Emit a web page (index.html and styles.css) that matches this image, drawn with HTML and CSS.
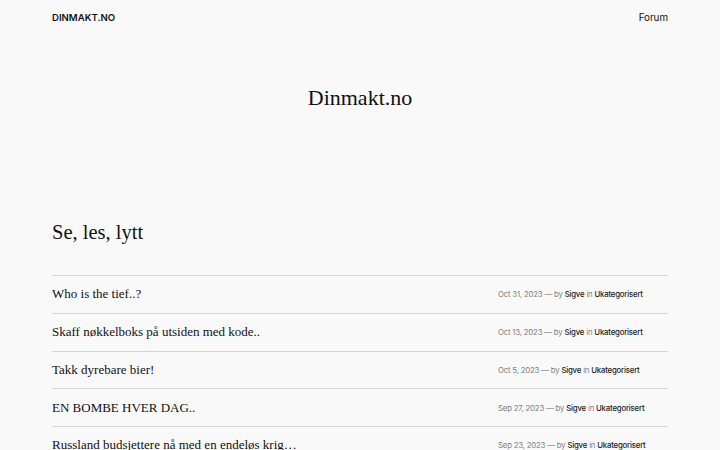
FILE: index.html
```html
<!DOCTYPE html>
<html lang="no">
<head>
<meta charset="utf-8">
<title>Dinmakt.no</title>
<link rel="stylesheet" href="styles.css">
</head>
<body>
<header class="site-header">
  <a class="site-name" href="#">DINMAKT.NO</a>
  <nav class="nav"><a href="#">Forum</a></nav>
</header>
<section class="hero">
  <h1 class="hero-title">Dinmakt.no</h1>
</section>
<main class="content">
  <h2 class="section-title">Se, les, lytt</h2>
  <ul class="posts">
    <li class="post">
      <a class="post-title" href="#">Who is the tief..?</a>
      <div class="meta"><span class="muted">Oct 31, 2023 — by</span> <span class="strong">Sigve</span> <span class="muted">in</span> <span class="strong">Ukategorisert</span></div>
    </li>
    <li class="post">
      <a class="post-title" href="#">Skaff nøkkelboks på utsiden med kode..</a>
      <div class="meta"><span class="muted">Oct 13, 2023 — by</span> <span class="strong">Sigve</span> <span class="muted">in</span> <span class="strong">Ukategorisert</span></div>
    </li>
    <li class="post">
      <a class="post-title" href="#">Takk dyrebare bier!</a>
      <div class="meta"><span class="muted">Oct 5, 2023 — by</span> <span class="strong">Sigve</span> <span class="muted">in</span> <span class="strong">Ukategorisert</span></div>
    </li>
    <li class="post">
      <a class="post-title" href="#">EN BOMBE HVER DAG..</a>
      <div class="meta"><span class="muted">Sep 27, 2023 — by</span> <span class="strong">Sigve</span> <span class="muted">in</span> <span class="strong">Ukategorisert</span></div>
    </li>
    <li class="post">
      <a class="post-title" href="#">Russland budsjettere nå med en endeløs krig…</a>
      <div class="meta"><span class="muted">Sep 23, 2023 — by</span> <span class="strong">Sigve</span> <span class="muted">in</span> <span class="strong">Ukategorisert</span></div>
    </li>
  </ul>
</main>
</body>
</html>
```
FILE: styles.css
```css
html, body {
  margin: 0;
  padding: 0;
  background: #f9f9f9;
  color: #111;
}
body {
  font-family: Inter, "Liberation Sans", sans-serif;
}
a {
  color: inherit;
  text-decoration: none;
}
.site-header {
  display: flex;
  justify-content: space-between;
  align-items: center;
  padding: 11px 52px 0;
  height: 13px;
}
.site-name {
  font-size: 9.6px;
  font-weight: 600;
}
.nav {
  font-size: 9.8px;
}
.hero {
  padding-top: 56px;
  text-align: center;
}
.hero-title {
  margin: 0;
  font-family: "Liberation Serif", serif;
  font-weight: 400;
  font-size: 22px;
  line-height: 36px;
}
.content {
  padding: 100px 52px 0;
}
.section-title {
  margin: 0 0 27px;
  font-family: "Liberation Serif", serif;
  font-weight: 400;
  font-size: 20.5px;
  line-height: 32px;
}
.posts {
  list-style: none;
  margin: 0;
  padding: 0;
}
.post {
  display: grid;
  grid-template-columns: 1fr 170px;
  align-items: center;
  height: 36.75px;
  border-top: 1px solid #d4d4d4;
}
.post-title {
  font-family: "Liberation Serif", serif;
  font-size: 13px;
}
.meta {
  font-size: 7.8px;
  letter-spacing: -0.2px;
}
.muted {
  color: #808080;
}
.strong {
  color: #222;
  font-weight: 500;
}
```
